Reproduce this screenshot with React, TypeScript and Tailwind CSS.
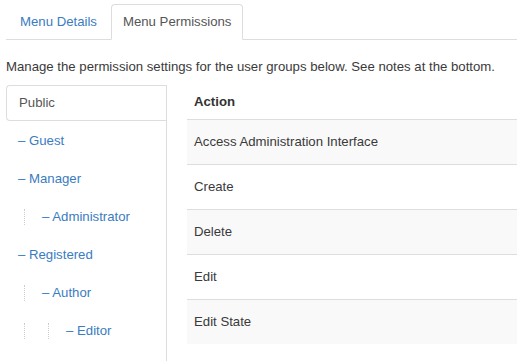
import React from "react";

type Group = { name: string; level: number };

const groups: Group[] = [
  { name: "Guest", level: 0 },
  { name: "Manager", level: 0 },
  { name: "Administrator", level: 1 },
  { name: "Registered", level: 0 },
  { name: "Author", level: 1 },
  { name: "Editor", level: 2 },
];

const actions = ["Access Administration Interface", "Create", "Delete", "Edit", "Edit State"];

function TreeItem({ name, level }: Group) {
  return (
    <li className="h-[38px] flex items-center pl-[12px] pt-[2px]">
      {/* dotted guides, one per level */}
      {Array.from({ length: level }).map((_, i) => (
        <span key={i} className="w-[24px] h-[36px] flex items-center pl-[6px]">
          <span className="block h-[16px] border-l border-dotted border-[#ccc]" />
        </span>
      ))}
      <a href="#" className="text-[#3a7cbf]">
        – {name}
      </a>
    </li>
  );
}

export default function App() {
  return (
    <div
      className="w-[517px] h-[361px] overflow-hidden bg-white pl-[6px] text-[13.2px] text-[#3a3a3a]"
      style={{ fontFamily: '"Liberation Sans", Arial, sans-serif' }}
    >
      {/* Tabs */}
      <ul className="flex pt-[4px] border-b border-[#ddd]">
        <li>
          <a href="#" className="flex items-center h-[35px] px-[14px] text-[#3a7cbf]">
            Menu Details
          </a>
        </li>
        <li className="-mb-px">
          <a
            href="#"
            className="flex items-center h-[36px] px-[11px] border border-[#ddd] border-b-white rounded-t-[4px] bg-white text-[#555]"
          >
            Menu Permissions
          </a>
        </li>
      </ul>

      <p className="mt-[18px] leading-[18px]">
        Manage the permission settings for the user groups below. See notes at the bottom.
      </p>

      <div className="flex items-start mt-[9px]">
        {/* Group list */}
        <ul className="w-[161px] shrink-0 border-r border-[#ddd] h-[280px]">
          <li className="h-[36px] flex items-center pl-[12px] border border-r-0 border-[#ddd] rounded-l-[4px] text-[#555]">
            Public
          </li>
          {groups.map((g) => (
            <TreeItem key={g.name} {...g} />
          ))}
        </ul>

        {/* Actions table */}
        <table className="ml-[20px] flex-1 border-collapse">
          <thead>
            <tr className="h-[34px] border-b border-[#ddd]">
              <th className="text-left font-bold px-[7px] text-[#333]">Action</th>
            </tr>
          </thead>
          <tbody>
            {actions.map((a, i) => (
              <tr
                key={a}
                className={`h-[45px] border-t border-[#ddd] ${i % 2 === 0 ? "bg-[#f9f9f9]" : "bg-white"}`}
              >
                <td className="px-[7px]">{a}</td>
              </tr>
            ))}
          </tbody>
        </table>
      </div>
    </div>
  );
}
